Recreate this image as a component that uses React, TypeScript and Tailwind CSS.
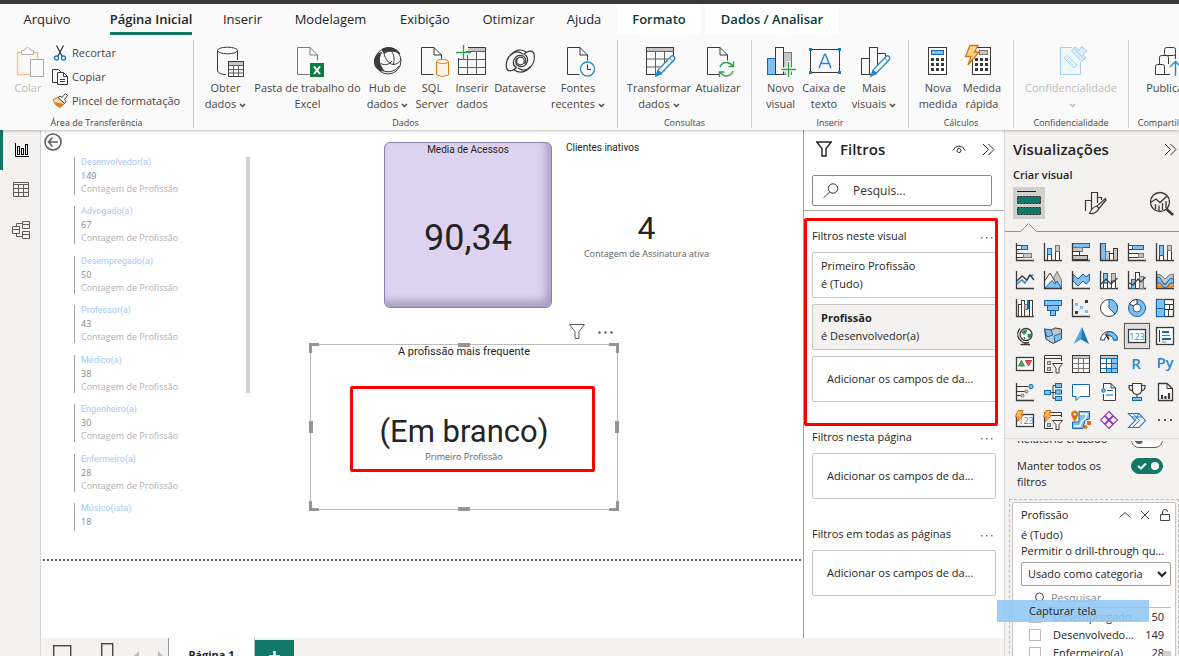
import React from "react";
import type { ReactNode } from "react";

const DARK = "#3b3a39";
const BLUE = "#1068b4";
const SKY = "#83beec";
const GRAY = "#c8c6c4";
const MID = "#797775";

/* ---------- drawing helpers ---------- */

function Big({ children }: { children: ReactNode }) {
  return (
    <svg width="32" height="32" viewBox="0 0 32 32" fill="none" stroke={DARK} className="shrink-0 overflow-visible" aria-hidden="true">
      {children}
    </svg>
  );
}

function Small({ children }: { children: ReactNode }) {
  return (
    <svg width="18" height="18" viewBox="0 0 18 18" fill="none" stroke={DARK} className="shrink-0 overflow-visible" aria-hidden="true">
      {children}
    </svg>
  );
}

const Page = ({ x = 5.5, stroke = DARK }: { x?: number; stroke?: string }) => (
  <path
    transform={`translate(${x} 1.5)`}
    d="M12 27 H0 V0 H12.5 L20 7.5 V13 M12.5 0 V7.5 H20"
    stroke={stroke}
    fill="none"
  />
);

const Pencil = () => (
  <g>
    <path d="M13 30 L15.5 23.5 L28 10.5 Q29.5 9 31 10.5 Q32.5 12 31.5 13.5 L19 26.5 Z" fill="#fafafa" stroke="#2b88c8" strokeWidth="1.3" />
    <path d="M13 30 L15 24 L19 27.5 Z" fill="#2b88c8" stroke="#2b88c8" />
    <path d="M26.5 12 L30 15.5" stroke="#2b88c8" />
  </g>
);

const Dots = ({ x, y }: { x: number; y: number }) => (
  <g fill={DARK} stroke="none">
    {[0, 1, 2].map((r) =>
      [0, 1, 2].map((c) => <rect key={`${r}-${c}`} x={x + c * 5} y={y + r * 5} width="3" height="3" />),
    )}
  </g>
);

/* ---------- ribbon icons ---------- */

const IconPaste = () => (
  <Big>
    <path d="M10 6.5 H5.5 V28.5 H18 M21 6.5 H25.5 V13" stroke="#f2c594" strokeWidth="1.4" />
    <path d="M6.800 7.800 H24.200 V13 M6.800 7.800 V27.200 H18" stroke="#fcecd9" strokeWidth="1.500" />
    <path d="M9.5 8.5 V4.5 H12.5 Q13 1.5 15.5 1.5 T18.5 4.5 H21.5 V8.5 Z" fill="#fafafa" stroke="#b8b6b4" />
    <rect x="18.5" y="13.5" width="13" height="17" fill="#fafafa" stroke="#b0aeac" />
  </Big>
);
const IconDatabase = () => (
  <Big>
    <path d="M7.500 4.500 V25 Q9 28.500 16 28.500 M27.500 4.500 V14" />
    <ellipse cx="17.500" cy="4.500" rx="10" ry="3.300" />
    <rect x="18.500" y="15.500" width="15" height="15" fill="#fafafa" />
    <rect x="19" y="16" width="14" height="3" fill={GRAY} stroke="none" />
    <path d="M18.500 19.500 h15 M18.500 23.500 h15 M18.500 27 h15 M23.500 19.500 v11 M28.500 19.500 v11" stroke="#605e5c" />
  </Big>
);
const IconExcel = () => (
  <Big>
    <Page stroke="#797775" />
    <rect x="18" y="17" width="14" height="14" fill="#107c41" stroke="none" />
    <path d="M22 20.500 L28 28 M28 20.500 L22 28" stroke="#fff" strokeWidth="2" />
  </Big>
);
const IconHub = () => (
  <Big>
    <circle cx="16" cy="15" r="13" />
    <path d="M9.500 6.500 C6 12 7 19 12 25 C5 25 2 20 2.500 14 C3 10 6 7.500 9.500 6.500 Z" fill={DARK} />
    <path d="M10 3.500 C16 -0.500 25 2 28 8 C23 4.500 17 4 12 7.500 Z" fill={DARK} />
    <path d="M12 7.500 C13 13 17 18 21 18.500 C25 18.500 28 16 29 13.500 M9 17.500 C13 20 18 18 20 15 M19 4.500 C22 8 23 14 21 18.500 M12 25 C17 27 24 25 27 20" />
  </Big>
);
const IconSql = () => (
  <Big>
    <Page x={5.500} />
    <path d="M20.500 15.500 V29 Q26.500 32 32.500 29 V15.500" fill="#fdf3e7" stroke="#e07b1c" />
    <ellipse cx="26.500" cy="15.500" rx="6" ry="2" fill="#fdf3e7" stroke="#e07b1c" />
  </Big>
);
const IconEnterData = () => (
  <Big>
    <rect x="12" y="2" width="17" height="3" fill={GRAY} stroke="none" />
    <path d="M12 1.500 H29.500 V28.500 H2.500 V12" />
    <path d="M10 5.500 H29.500 M2.500 13.500 H29.500 M2.500 21.500 H29.500 M11.500 9 V28.500 M20.500 5.500 V28.500" stroke="#605e5c" />
    <path d="M7.500 -1 V14 M0 6.500 H15" stroke="#2f9e4f" strokeWidth="1.400" />
  </Big>
);
const IconDataverse = () => (
  <Big>
    <path d="M19 8 C9 1 1 13 2.500 22 C4 27 10 24.500 12.500 21.500 C6 18 11 8 17.500 9.500 C22 10.500 23 15 20.500 18" strokeWidth="1.200" />
    <path d="M14 22 C24 29 32 17 30 8 C28.500 3 23 5.500 20 8 C27 12 22.500 22 16 20.500 C11.500 19.500 10.500 15 13 12" strokeWidth="1.200" />
    <path d="M7 9 C12 3 18 3 22 6 M26 21 C21 27 15 27 10 24" strokeWidth="1.200" />
    <circle cx="16.500" cy="15" r="3.800" strokeWidth="1.200" />
  </Big>
);
const IconRecent = () => (
  <Big>
    <Page />
    <circle cx="25.500" cy="23" r="7" fill="#fafafa" stroke="#2b88c8" strokeWidth="1.300" />
    <path d="M25.500 18.500 V23.500 H29" />
  </Big>
);
const IconTransform = () => (
  <Big>
    <rect x="3.500" y="1.500" width="27" height="27" />
    <rect x="4" y="2" width="26" height="3" fill={GRAY} stroke="none" />
    <path d="M3.500 5.500 h27 M3.500 13 h27 M3.500 21 h27 M12.500 5.500 v23 M21.500 5.500 v23" stroke="#605e5c" />
    <path d="M31 15 V30 H17 Z" fill="#fafafa" stroke="none" />
    <Pencil />
  </Big>
);
const IconRefresh = () => (
  <Big>
    <Page x={5.500} />
    <circle cx="24.500" cy="23" r="8" fill="#fafafa" stroke="none" />
    <path d="M18 21 Q20 16 25 16.500 Q29 17 31 20.500 M31.500 15.500 V20.500 H26.500 M31 25 Q29 30 24.500 30 Q20 29.500 18 26 M17.500 31 V26 H22.500" stroke="#2f9e4f" strokeWidth="1.400" />
  </Big>
);
const IconNewVisual = () => (
  <Big>
    <rect x="2.500" y="12.500" width="8" height="16" fill={SKY} stroke={BLUE} />
    <rect x="18.500" y="6.500" width="8" height="22" fill={GRAY} stroke={MID} />
    <rect x="10.500" y="1.500" width="8" height="27" fill="#fafafa" />
    <path d="M23.500 15 V31 M16 23.500 H31" stroke="#fafafa" strokeWidth="4" />
    <path d="M23.500 16 V31 M16.500 23.500 H31" stroke="#2f9e4f" strokeWidth="1.400" />
  </Big>
);
const IconTextBox = () => (
  <Big>
    <rect x="2.500" y="3.500" width="29" height="23" />
    <path d="M11 22 L16.500 8.500 H17.500 L23 22 M13 17.500 H21" stroke="#2b88c8" strokeWidth="1.500" />
    <g fill="#0f7bc8" stroke="none">
      <rect x="1" y="2" width="3" height="3" />
      <rect x="30" y="2" width="3" height="3" />
      <rect x="1" y="25" width="3" height="3" />
      <rect x="30" y="25" width="3" height="3" />
    </g>
  </Big>
);
const IconMoreVisuals = () => (
  <Big>
    <rect x="3.500" y="12.500" width="8" height="16" />
    <rect x="11.500" y="1.500" width="8" height="27" />
    <path d="M19.500 7.500 H27.500 V28.500 H19.500" />
    <path d="M28 15 V31 H16 Z" fill="#fafafa" stroke="none" />
    <Pencil />
  </Big>
);
const IconCalculator = () => (
  <Big>
    <rect x="6.500" y="1.500" width="18" height="27" fill="#fff" />
    <rect x="9.500" y="4.500" width="12" height="4" fill={SKY} stroke={BLUE} />
    <Dots x={9} y={12} />
  </Big>
);
const IconQuickMeasure = () => (
  <Big>
    <rect x="6.500" y="1.500" width="18" height="27" fill="#fff" />
    <rect x="13.500" y="4.500" width="8" height="4" fill={GRAY} stroke={MID} />
    <Dots x={9} y={12} />
    <path d="M4 -0.500 H12 L8.500 6 H13 L2 19 L5 10.500 H-0.500 Z" fill="#fcd58f" stroke="#d9730d" strokeWidth="1.300" />
  </Big>
);
const IconSensitivity = () => (
  <Big>
    <path d="M17 1.500 H5.500 V28.500 H25.500 V16" stroke="#a5cfe8" fill="#f1f8fc" />
    <path d="M9 12 L12 9.500 L22 19 L19 22 Z M12 12.500 L19 19.500" stroke="#a5cfe8" />
    <path d="M16.500 5 L20 1 L24 4.500 L26.500 0.500 L32 5 L28 8.500 L31 12 L27 15.500 Z" fill="#dceef7" stroke="#9ccbe6" />
    <path d="M19 2.500 L29 13" stroke="#9ccbe6" />
  </Big>
);
const IconPublish = () => (
  <Big>
    <rect x="13.500" y="1.500" width="11" height="8" rx="2" />
    <path d="M17.500 18 V11.500 Q17.500 9.500 15.500 9.500 H10.500 Q8.500 9.500 8.500 11.500 V18 M24.500 8 V13" />
    <path d="M13.500 28.500 V20.500 Q13.500 18.500 11.500 18.500 H6.500 Q4.500 18.500 4.500 20.500 V28.500 H19" />
    <path d="M24.500 30 V15 M19 21 L24.500 15.500 L30 21" stroke="#2b88c8" strokeWidth="1.400" />
  </Big>
);

const CutIcon = () => (
  <svg width="16" height="16" viewBox="0 0 16 16" fill="none" stroke={DARK} aria-hidden="true">
    <path d="M4.500 0.500 L10.500 12 M11.500 0.500 L5.500 12" strokeWidth="1.300" />
    <circle cx="4.500" cy="13" r="2" stroke="#0f7bc8" strokeWidth="1.300" />
    <circle cx="11.500" cy="13" r="2" stroke="#0f7bc8" strokeWidth="1.300" />
  </svg>
);
const CopyIcon = () => (
  <svg width="16" height="16" viewBox="0 0 16 16" fill="none" stroke={DARK} aria-hidden="true">
    <path d="M5 13.500 H0.500 V0.500 H6.500 L9 3" />
    <path d="M5.500 3.500 H11.500 L15.500 7.500 V15.500 H5.500 Z M11.500 3.500 V7.500 H15.500 M8 10.500 H13 M8 12.500 H13" />
  </svg>
);
const BrushIcon = () => (
  <svg width="16" height="16" viewBox="0 0 16 16" fill="none" stroke={DARK} aria-hidden="true">
    <path d="M1 6.500 L6 4.500 L12.500 10.500 L8 14.500 Q3 13 1 6.500 Z" fill="#fce0b5" stroke="#e07b1c" />
    <path d="M2 9 L12 11 L8 14.500 Q4 13 2 9 Z" fill="#e07b1c" stroke="none" />
    <path d="M6 4.500 L8 3 L10 4.500 L13.500 0.500 L15.500 2.500 L12.500 6.500 L14 8.500 L12.500 10.500 Z" fill="#fafafa" />
  </svg>
);

const Chevron = () => (
  <svg width="7" height="5" viewBox="0 0 7 5" fill="none" stroke="currentColor" strokeWidth="1.500" className="ml-[3px] inline-block" aria-hidden="true">
    <path d="M1 1 L3.500 3.500 L6 1" />
  </svg>
);

/* ---------- ribbon ---------- */

function RibbonButton({ width, icon, lines, menu, muted }: { width: string; icon: ReactNode; lines: string[]; menu?: boolean; muted?: boolean }) {
  return (
    <button type="button" disabled={muted} className={`flex shrink-0 flex-col items-center ${width} ${muted ? "text-[#bdbbb9]" : "text-[#484644]"}`}>
      {icon}
      <span className="mt-0.5 block text-center text-[11px] leading-4 whitespace-nowrap">
        {lines.map((line, i) => (
          <span key={line} className="block">
            {line}
            {menu && i === lines.length - 1 && <Chevron />}
          </span>
        ))}
      </span>
    </button>
  );
}

function RibbonGroup({ width, label, pad, children }: { width: string; label: string; pad: string; children: ReactNode }) {
  return (
    <section className={`flex shrink-0 flex-col border-r border-[#d2d0ce] ${width}`}>
      <div className={`flex h-[78px] shrink-0 pt-1.5 ${pad}`}>{children}</div>
      <h2 className="text-center text-[9px] leading-[10px] text-[#484644]">{label}</h2>
    </section>
  );
}

const tabs = [
  { name: "Arquivo", box: "w-[94px]" },
  { name: "Página Inicial", box: "w-[114px]", active: true },
  { name: "Inserir", box: "w-[69px]" },
  { name: "Modelagem", box: "w-[107px]" },
  { name: "Exibição", box: "w-[82px]" },
  { name: "Otimizar", box: "w-[85px]" },
  { name: "Ajuda", box: "w-[66px]" },
  { name: "Formato", box: "w-[84px]", context: true },
  { name: "Dados / Analisar", box: "w-[134px] ml-1", context: true },
];

function Header() {
  return (
    <header className="relative z-10 shrink-0 bg-[#fafafa] shadow-[0_1px_3px_rgba(0,0,0,0.25)]">
      <div className="h-1 bg-[#3b3a39]" />
      <nav className="flex h-[31px] text-[13px] text-[#252423]">
        {tabs.map((t) => (
          <button
            key={t.name}
            type="button"
            className={`flex shrink-0 justify-center whitespace-nowrap ${t.box} ${t.context ? "bg-white font-semibold text-[#0b3b37]" : ""} ${t.active ? "font-semibold" : ""}`}
          >
            <span className={`flex h-full items-center border-b-[3px] pt-1 ${t.active ? "border-[#117865]" : "border-transparent"}`}>{t.name}</span>
          </button>
        ))}
      </nav>
      <div className="flex h-[95px] overflow-hidden pt-[5px] pb-0.5">
        <section className="flex w-[194px] shrink-0 flex-col border-r border-[#d2d0ce]">
          <div className="flex h-[78px] shrink-0 pt-1.5 pl-2">
            <RibbonButton width="w-10" icon={<IconPaste />} lines={["Colar"]} muted />
            <div className="-mt-[5px] ml-1 flex flex-col text-[11px] text-[#484644]">
              <button type="button" className="flex h-6 items-center gap-1"><CutIcon />Recortar</button>
              <button type="button" className="flex h-6 items-center gap-1"><CopyIcon />Copiar</button>
              <button type="button" className="flex h-6 items-center gap-1 whitespace-nowrap"><BrushIcon />Pincel de formatação</button>
            </div>
          </div>
          <h2 className="text-center text-[9px] leading-[10px] text-[#484644]">Área de Transferência</h2>
        </section>
        <RibbonGroup width="w-[424px]" label="Dados" pad="pl-1.5">
          <RibbonButton width="w-[51px]" icon={<IconDatabase />} lines={["Obter", "dados"]} menu />
          <RibbonButton width="w-[113px]" icon={<IconExcel />} lines={["Pasta de trabalho do", "Excel"]} />
          <RibbonButton width="w-[47px]" icon={<IconHub />} lines={["Hub de", "dados"]} menu />
          <RibbonButton width="w-[42px]" icon={<IconSql />} lines={["SQL", "Server"]} />
          <RibbonButton width="w-[38px]" icon={<IconEnterData />} lines={["Inserir", "dados"]} />
          <RibbonButton width="w-[58px]" icon={<IconDataverse />} lines={["Dataverse"]} />
          <RibbonButton width="w-[58px]" icon={<IconRecent />} lines={["Fontes", "recentes"]} menu />
        </RibbonGroup>
        <RibbonGroup width="w-[134px]" label="Consultas" pad="pl-2">
          <RibbonButton width="w-[66px]" icon={<IconTransform />} lines={["Transformar", "dados"]} menu />
          <RibbonButton width="w-[52px]" icon={<IconRefresh />} lines={["Atualizar"]} />
        </RibbonGroup>
        <RibbonGroup width="w-[157px]" label="Inserir" pad="pl-2.5">
          <RibbonButton width="w-[37px]" icon={<IconNewVisual />} lines={["Novo", "visual"]} />
          <RibbonButton width="w-[50px]" icon={<IconTextBox />} lines={["Caixa de", "texto"]} />
          <RibbonButton width="w-[50px]" icon={<IconMoreVisuals />} lines={["Mais", "visuais"]} menu />
        </RibbonGroup>
        <RibbonGroup width="w-[105px]" label="Cálculos" pad="pl-[7px]">
          <RibbonButton width="w-[44px]" icon={<IconCalculator />} lines={["Nova", "medida"]} />
          <RibbonButton width="w-[44px]" icon={<IconQuickMeasure />} lines={["Medida", "rápida"]} />
        </RibbonGroup>
        <RibbonGroup width="w-[115px]" label="Confidencialidade" pad="">
          <RibbonButton width="w-[114px]" icon={<IconSensitivity />} lines={["Confidencialidade", ""]} menu muted />
        </RibbonGroup>
        <RibbonGroup width="w-[74px]" label="Compartilhar" pad="">
          <RibbonButton width="w-[76px]" icon={<IconPublish />} lines={["Publicar"]} />
        </RibbonGroup>
      </div>
    </header>
  );
}

/* ---------- left rail ---------- */

function Rail() {
  return (
    <nav className="flex w-[41px] shrink-0 flex-col border-r border-[#d8d6d4] bg-[#f3f2f1]">
      <button type="button" aria-label="Relatório" className="flex h-10 items-center justify-center border-l-[3px] border-[#117865]">
        <svg width="16" height="16" viewBox="0 0 16 16" fill="none" stroke="#000" aria-hidden="true">
          <path d="M1.500 1 V14.500 H15" />
          <rect x="3.500" y="4.500" width="2" height="8" />
          <rect x="7.500" y="6.500" width="2" height="6" />
          <rect x="11.500" y="2.500" width="2" height="10" />
        </svg>
      </button>
      <button type="button" aria-label="Dados" className="flex h-10 items-center justify-center pl-0.5">
        <svg width="16" height="16" viewBox="0 0 16 16" fill="none" stroke="#605e5c" aria-hidden="true">
          <path d="M0.500 0.500 h15 v14 h-15 Z M0.500 2.500 h15 M0.500 6.500 h15 M0.500 10.500 h15 M5.500 2.500 v12 M10.500 2.500 v12" />
        </svg>
      </button>
      <button type="button" aria-label="Modelo" className="flex h-10 items-center justify-center pl-0.5">
        <svg width="18" height="18" viewBox="0 0 18 18" fill="none" stroke="#605e5c" aria-hidden="true">
          <path d="M10.500 0.500 h7 v7 h-7 Z M10.500 3.500 h7 M10.500 10.500 h7 v7 h-7 Z M10.500 13.500 h7 M0.500 5.500 h7 v7 h-7 Z M0.500 8.500 h7 M4.500 5.500 V2.500 H10.500 M4.500 12.500 V15.500 H10.500" />
        </svg>
      </button>
    </nav>
  );
}

/* ---------- report canvas ---------- */

const professions = [
  { name: "Desenvolvedor(a)", count: 149 },
  { name: "Advogado(a)", count: 67 },
  { name: "Desempregado(a)", count: 50 },
  { name: "Professor(a)", count: 43 },
  { name: "Médico(a)", count: 38 },
  { name: "Engenheiro(a)", count: 30 },
  { name: "Enfermeiro(a)", count: 28 },
  { name: "Músico(ista)", count: 18 },
];

const handles = [
  "-top-0.5 -left-0.5 h-2.5 w-2.5 border-t-[3px] border-l-[3px]",
  "-top-0.5 -right-0.5 h-2.5 w-2.5 border-t-[3px] border-r-[3px]",
  "-bottom-0.5 -left-0.5 h-2.5 w-2.5 border-b-[3px] border-l-[3px]",
  "-bottom-0.5 -right-0.5 h-2.5 w-2.5 border-b-[3px] border-r-[3px]",
  "-top-0.5 left-[147px] h-1 w-3 border-2",
  "-bottom-0.5 left-[147px] h-1 w-3 border-2",
  "top-[76px] -left-0.5 h-3 w-1 border-2",
  "top-[76px] -right-0.5 h-3 w-1 border-2",
];

function Canvas() {
  return (
    <main className="relative min-w-0 flex-1 overflow-hidden bg-white">
      <button type="button" aria-label="Voltar" className="absolute top-[3px] left-[3px]">
        <svg width="18" height="18" viewBox="0 0 18 18" fill="none" stroke="#605e5c" strokeWidth="1.600" aria-hidden="true">
          <circle cx="9" cy="9" r="8" />
          <path d="M14 9 H4.500 M8.500 4.500 L4.500 9 L8.500 13.500" />
        </svg>
      </button>

      <div className="absolute top-[27px] left-[33px] h-[374px] w-[176px] overflow-hidden">
        <ul className="flex h-[384px] flex-col justify-between">
          {professions.map((p) => (
            <li key={p.name} className="h-[38px] border-l border-[#a19f9d] pl-1.5 text-[9px]">
              <p className="h-[11px] font-[Roboto,sans-serif] leading-[10px] text-[#a9c8f5]">{p.name}</p>
              <p className="leading-4 text-[#8a8886]">{p.count}</p>
              <p className="leading-[10px] text-[#b3b1af]">Contagem de Profissão</p>
            </li>
          ))}
        </ul>
        <div className="absolute top-0 right-0 h-[236px] w-1 bg-[#d2d0ce]" />
      </div>

      <article className="absolute top-3 left-[343px] flex h-[166px] w-[168px] flex-col items-center rounded-md border border-[#8c82ab] bg-[#ddd3f0] font-[Roboto,sans-serif] text-[#252423] shadow-[inset_-5px_-6px_9px_rgba(60,45,90,0.32)]">
        <h3 className="text-[10px] leading-[14px]">Media de Acessos</h3>
        <p className="mt-[59px] text-[36px] leading-[44px]">90,34</p>
      </article>

      <article className="absolute top-[11px] left-[525px] flex w-[161px] flex-col font-[Roboto,sans-serif] text-[#252423]">
        <h3 className="text-[10px] leading-[14px]">Clientes inativos</h3>
        <p className="mt-[55px] text-center text-[32px] leading-9">4</p>
        <p className="text-center font-['Open_Sans',sans-serif] text-[9px] leading-4 text-[#605e5c]">Contagem de Assinatura ativa</p>
      </article>

      <div className="absolute top-[193px] left-[527px] flex items-center gap-3">
        <svg width="18" height="18" viewBox="0 0 18 18" fill="none" stroke="#605e5c" aria-hidden="true">
          <path d="M1.500 1.500 H16.500 L11 8.500 V15.500 H7 V8.500 Z" />
        </svg>
        <svg width="16" height="3" viewBox="0 0 16 3" fill="#605e5c" aria-hidden="true">
          <circle cx="1.500" cy="1.500" r="1.200" />
          <circle cx="7.500" cy="1.500" r="1.200" />
          <circle cx="13.500" cy="1.500" r="1.200" />
        </svg>
      </div>

      <article className="absolute top-[214px] left-[269px] flex h-[166px] w-[308px] flex-col items-center border border-[#bebbb8] font-[Roboto,sans-serif] text-[#252423]">
        <h3 className="text-[11px] leading-[13px]">A profissão mais frequente</h3>
        <p className="mt-14 text-[31px] leading-9">(Em branco)</p>
        <p className="font-['Open_Sans',sans-serif] text-[9px] leading-[14px] text-[#605e5c]">Primeiro Profissão</p>
        {handles.map((h) => (
          <span key={h} className={`absolute border-[#979593] ${h}`} />
        ))}
        <span className="absolute top-[41px] left-[39px] h-[86px] w-[245px] rounded-xs border-[3px] border-[#fb0000]" />
      </article>

      <div className="absolute top-[429px] right-0 left-0.5 h-0.5 bg-[repeating-linear-gradient(90deg,#605e5c_0_2px,transparent_2px_4px)]" />
    </main>
  );
}

/* ---------- filters pane ---------- */

const DoubleChevron = () => (
  <svg width="13" height="13" viewBox="0 0 13 13" fill="none" stroke="#323130" aria-hidden="true">
    <path d="M1 1 L6.500 6.500 L1 12 M6.500 1 L12 6.500 L6.500 12" />
  </svg>
);

const SearchIcon = () => (
  <svg width="16" height="16" viewBox="0 0 16 16" fill="none" stroke="#323130" className="shrink-0" aria-hidden="true">
    <circle cx="10" cy="5.500" r="4.700" />
    <path d="M6.500 9 L0.800 14.800" />
  </svg>
);

const DropBox = () => (
  <div className="flex h-[46px] items-center rounded-xs border border-[#c8c6c4] bg-white pl-3.5 text-[11px] whitespace-nowrap">Adicionar os campos de da...</div>
);

function FilterSection({ title, children }: { title: string; children: ReactNode }) {
  return (
    <section className="flex flex-col gap-1.5">
      <div className="-mb-1.5 flex h-8 items-center justify-between pr-[3px] text-[11px]">
        <h3>{title}</h3>
        <button type="button" aria-label={`Opções de ${title}`} className="pt-1">
          <svg width="12" height="2" viewBox="0 0 12 2" fill="#797775" aria-hidden="true">
            <rect width="1.500" height="1.500" />
            <rect x="5" width="1.500" height="1.500" />
            <rect x="10" width="1.500" height="1.500" />
          </svg>
        </button>
      </div>
      {children}
    </section>
  );
}

function Filters() {
  return (
    <aside className="relative flex w-[201px] shrink-0 flex-col border-l border-[#a19f9d] bg-white text-[#252423]">
      <div className="flex h-[38px] items-center pl-3 pr-[9px]">
        <svg width="16" height="16" viewBox="0 0 16 16" fill="none" stroke="#252423" strokeWidth="1.400" aria-hidden="true">
          <path d="M0.700 1 H15.300 L10 7.500 V15 H6 V7.500 Z" />
        </svg>
        <h2 className="ml-2 flex-1 text-[15px] font-semibold">Filtros</h2>
        <svg width="14" height="9" viewBox="0 0 14 9" fill="none" stroke="#323130" className="mr-4" aria-hidden="true">
          <path d="M1 5.500 Q3 1 7 1 T13 5.500" />
          <circle cx="7" cy="5.500" r="2" />
        </svg>
        <DoubleChevron />
      </div>
      <div className="border-b border-[#b3b0ad] px-2 pt-[7px] pb-1">
        <label className="mr-1 flex h-[31px] items-center rounded-xs border border-[#8a8886] pl-2.5">
          <SearchIcon />
          <input type="text" aria-label="Pesquisar filtros" placeholder="Pesquis..." className="ml-3.5 w-full min-w-0 text-xs outline-none placeholder:text-[#323130]" />
        </label>
      </div>
      <div className="flex flex-col gap-[19px] pt-[9px] pr-2 pl-2">
        <FilterSection title="Filtros neste visual">
          <div className="h-[46px] rounded-xs border border-[#c8c6c4] pt-1 pl-2 text-[11px] leading-[18px]">
            <p>Primeiro Profissão</p>
            <p>é (Tudo)</p>
          </div>
          <div className="h-[46px] rounded-xs border border-[#c8c6c4] bg-[#f3f2f1] pt-1 pl-2 text-[11px] leading-[18px]">
            <p className="font-bold">Profissão</p>
            <p>é Desenvolvedor(a)</p>
          </div>
          <DropBox />
        </FilterSection>
        <FilterSection title="Filtros nesta página">
          <DropBox />
        </FilterSection>
        <FilterSection title="Filtros em todas as páginas">
          <DropBox />
        </FilterSection>
      </div>
      <span className="absolute top-[88px] left-0 h-[208px] w-[194px] rounded-xs border-[3px] border-[#fb0000]" />
    </aside>
  );
}

/* ---------- visualizations pane ---------- */

const axes = <path d="M0.500 0 V17.500 H18" strokeWidth="1.300" />;

const visuals: { label: string; art: ReactNode }[] = [
  { label: "Barras empilhadas", art: <>{axes}<rect x="0.500" y="2.500" width="5" height="4" fill="#fff" /><rect x="5.500" y="2.500" width="6" height="4" fill={SKY} stroke={BLUE} /><rect x="0.500" y="10.500" width="7" height="4" fill="#fff" /><rect x="7.500" y="10.500" width="8" height="4" fill={GRAY} stroke={MID} /></> },
  { label: "Colunas empilhadas", art: <>{axes}<rect x="3.500" y="11.500" width="4" height="6" fill="#fff" /><rect x="3.500" y="5.500" width="4" height="6" fill={SKY} stroke={BLUE} /><rect x="11.500" y="8.500" width="4" height="9" fill="#fff" /><rect x="11.500" y="2.500" width="4" height="6" fill={GRAY} stroke={MID} /></> },
  { label: "Barras agrupadas", art: <><rect x="0.500" y="0.500" width="17" height="4" fill={SKY} stroke={BLUE} /><rect x="0.500" y="4.500" width="10" height="4" fill={GRAY} stroke={MID} /><rect x="0.500" y="8.500" width="7" height="4" fill="#fff" /><rect x="0.500" y="12.500" width="15" height="4" fill={GRAY} stroke={DARK} />{axes}</> },
  { label: "Colunas agrupadas", art: <><rect x="0.500" y="0.500" width="5" height="17" fill={SKY} stroke={BLUE} /><rect x="5.500" y="8.500" width="4" height="9" fill={GRAY} stroke={MID} /><rect x="9.500" y="10.500" width="4" height="7" fill="#fff" /><rect x="13.500" y="5.500" width="4" height="12" fill={GRAY} stroke={DARK} />{axes}</> },
  { label: "Barras 100%", art: <>{axes}<rect x="0.500" y="2.500" width="4" height="4" fill="#fff" /><rect x="4.500" y="2.500" width="11" height="4" fill={SKY} stroke={BLUE} /><rect x="0.500" y="10.500" width="10" height="4" fill="#fff" /><rect x="10.500" y="10.500" width="5" height="4" fill={GRAY} stroke={MID} /></> },
  { label: "Colunas 100%", art: <>{axes}<rect x="3.500" y="12.500" width="4" height="5" fill="#fff" /><rect x="3.500" y="2.500" width="4" height="10" fill={SKY} stroke={BLUE} /><rect x="11.500" y="7.500" width="4" height="10" fill="#fff" /><rect x="11.500" y="2.500" width="4" height="5" fill={GRAY} stroke={MID} /></> },

  { label: "Linhas", art: <>{axes}<path d="M1 13 L6 9 L9 12 L13 5 L17.500 4" stroke="#2b88c8" strokeWidth="1.400" /><path d="M1 10 L6 5 L11 9 L14 4 L18 9" strokeWidth="1.400" /></> },
  { label: "Área", art: <><path d="M10 6 L13 0.500 L17.500 9 V17.500 H10 Z" fill={GRAY} stroke={MID} /><path d="M0.500 17.500 V10 L6 2 L15 17.500 Z" fill="#fff" /><path d="M0.500 17.500 L8 9.500 L11 13 L13 10 L17.500 17.500 Z" fill={SKY} stroke={BLUE} />{axes}</> },
  { label: "Área empilhada", art: <><path d="M1 3 L6 8 L11 3 L14 6 L17.500 3 V10 L14 13 L11 10 L6 15 L1 10 Z" fill={SKY} stroke={BLUE} />{axes}</> },
  { label: "Linhas e colunas empilhadas", art: <>{axes}<rect x="3.500" y="2.500" width="4" height="15" fill={SKY} stroke={BLUE} /><rect x="11.500" y="2.500" width="4" height="15" fill={GRAY} stroke={MID} /><path d="M3.500 12 h4 v5.500 h-4 Z M11.500 10 h4 v7.500 h-4 Z" fill="#fff" /><path d="M1 13 L6 8 L11 13 L17.500 7" strokeWidth="1.200" /></> },
  { label: "Linhas e colunas agrupadas", art: <>{axes}<rect x="3.500" y="8.500" width="4" height="9" fill={SKY} stroke={BLUE} /><rect x="7.500" y="1.500" width="4" height="16" fill="#fff" /><rect x="11.500" y="5.500" width="4" height="12" fill={GRAY} stroke={MID} /><path d="M1 12 L5 14 L10 8 L13 11 L17.500 6" strokeWidth="1.200" /></> },
  { label: "Faixas", art: <><path d="M1 10 L6 10 L9 14 L13 10 H17.500 V16 H1 Z" fill="#f2a04f" stroke="#d9730d" /><path d="M1 3 Q5 3 9 8 Q13 3 17.500 3 V9 Q13 9 9 13 Q5 9 1 9 Z" fill={GRAY} stroke={MID} /><path d="M1 6 Q4 5 6 10 Q9 17 12 10 Q14 6 17.500 8 V12 Q14 11 12 15 Q9 19 6 14 Q4 11 1 12 Z" fill={SKY} stroke={BLUE} />{axes}</> },

  { label: "Cascata", art: <>{axes}<rect x="2.500" y="5.500" width="3" height="12" fill="#fff" /><rect x="5.500" y="1.500" width="3" height="16" fill="#fff" /><rect x="8.500" y="5.500" width="3" height="5" fill={GRAY} stroke={MID} /><rect x="11" y="1" width="2" height="9" fill={BLUE} stroke="none" /><rect x="13.500" y="1.500" width="3" height="16" fill="#fff" /></> },
  { label: "Funil", art: <g fill={SKY} stroke={BLUE}><rect x="0.500" y="1.500" width="17" height="5" /><rect x="3.500" y="6.500" width="11" height="5" /><rect x="6.500" y="11.500" width="5" height="5" /></g> },
  { label: "Dispersão", art: <>{axes}<g stroke="none"><rect x="3" y="4" width="3" height="3" fill={SKY} /><rect x="13" y="1" width="3" height="3" fill={DARK} /><rect x="8" y="7" width="3" height="3" fill={SKY} /><rect x="3" y="12" width="3" height="3" fill={DARK} /><rect x="13" y="11" width="3" height="3" fill={SKY} /></g></> },
  { label: "Pizza", art: <><circle cx="9" cy="9" r="8.500" fill="#fff" /><path d="M9 9 V0.500 A8.500 8.500 0 0 1 15 15 Z" fill={SKY} stroke={BLUE} /></> },
  { label: "Rosca", art: <><circle cx="9" cy="9" r="6.300" stroke={SKY} strokeWidth="4.500" /><circle cx="9" cy="9" r="8.500" stroke={BLUE} /><circle cx="9" cy="9" r="4" stroke={BLUE} fill="#fff" /><path d="M9 0.500 A8.500 8.500 0 0 0 1.500 5 L5.500 7 A4 4 0 0 1 9 5 Z" fill="#fff" /></> },
  { label: "Treemap", art: <><rect x="0.500" y="0.500" width="17" height="17" fill="#fff" strokeWidth="1.300" /><path d="M0.500 0.500 h8 v9 h-8 Z M0.500 9.500 h8 v8 h-8 Z" fill={SKY} stroke={BLUE} /><path d="M8.500 5.500 h9 M8.500 10.500 h9 M13.500 5.500 v5 M12.500 10.500 v7" /></> },

  { label: "Mapa", art: <><circle cx="10" cy="7.500" r="6" fill="#fff" strokeWidth="1.300" /><path d="M6 5 L10 3 L10.500 5 L8 7.500 Z M12 7.500 L15 7 L14 11 L12 10 Z M8 10 L9 12 Z" fill="#2f9e4f" stroke="#2f7d46" /><path d="M4 1.500 A8.500 8.500 0 0 0 13 15.300 M9 15.500 V17.500 M4.500 17.500 H14" strokeWidth="1.300" /></> },
  { label: "Mapa coroplético", art: <><path d="M0.500 2 L7 3 L11 1 L17.500 2 V12 L9 16.500 L2 12 Z" fill={GRAY} stroke={DARK} /><path d="M0.500 2 L7 3 L9 8 L3 10 Z M10 9 L17.500 6 V12 L11 15.500 Z" fill={SKY} stroke={BLUE} /></> },
  { label: "Mapa do Azure", art: <><path d="M10 0 L1.500 17 L9 12.500 Z" fill="#58a8dc" stroke="none" /><path d="M10 0 L17 17 L9 12.500 Z" fill="#1d78b4" stroke="none" /></> },
  { label: "Indicador", art: <><path d="M0.500 13 A8.500 8.500 0 0 1 17.500 13 H13.500 A4.500 4.500 0 0 0 4.500 13 Z" fill="#fff" /><path d="M7 4.800 A8.500 8.500 0 0 1 17.500 13 H13.500 A4.500 4.500 0 0 0 8.500 8.500 Z" fill={SKY} stroke={BLUE} /><path d="M9 12.500 L5.500 6.500" strokeWidth="1.800" /></> },
  { label: "Cartão", art: <><rect x="0.500" y="2.500" width="17" height="13" fill="#fff" strokeWidth="1.300" /><text x="9" y="12.500" fontSize="9" textAnchor="middle" fill="#2b88c8" stroke="none" className="font-['Open_Sans',sans-serif]">123</text></> },
  { label: "Cartão de várias linhas", art: <><rect x="0.500" y="0.500" width="17" height="17" fill="#fff" strokeWidth="1.300" /><path d="M3.500 3 V15" /><path d="M6 5 H13 M6 12 H15" stroke={BLUE} strokeWidth="2" /><path d="M6 8.500 H14 M6 15 H10" stroke={MID} /></> },

  { label: "KPI", art: <><rect x="0.500" y="2.500" width="17" height="13" fill="#fff" strokeWidth="1.300" /><path d="M5.500 5.500 L8.500 11 H2.500 Z" fill="#4caf68" stroke="#2f7d46" /><path d="M9.500 5.500 H15.500 L12.500 11 Z" fill="#e25555" stroke="#c22f2f" /></> },
  { label: "Segmentação", art: <><path d="M9 17.500 H0.500 V0.500 H17.500 V6" /><path d="M0.500 3.500 H17.500" /><rect x="3.500" y="6.500" width="3" height="3" stroke={MID} fill={GRAY} /><rect x="3.500" y="12.500" width="3" height="3" stroke={MID} fill={GRAY} /><path d="M8.500 8.500 H18.500 L15 13 V18 H12 V13 Z" fill="#fff" /></> },
  { label: "Tabela", art: <><rect x="0.500" y="0.500" width="17" height="17" fill="#fff" /><rect x="1" y="1" width="16" height="2" fill={GRAY} stroke="none" /><path d="M0.500 3.500 h17 M0.500 8.500 h17 M0.500 13.500 h17 M6.500 3.500 v14 M11.500 3.500 v14" stroke={MID} /></> },
  { label: "Matriz", art: <><rect x="0.500" y="0.500" width="17" height="17" fill="#fff" /><rect x="1" y="1" width="16" height="2" fill={GRAY} stroke="none" /><path d="M11.500 3.500 h6 v14 h-11 v-4 h5 Z" fill={SKY} stroke={BLUE} /><path d="M0.500 3.500 h17 M0.500 8.500 h17 M0.500 13.500 h17 M6.500 3.500 v14 M11.500 3.500 v14" stroke={BLUE} /></> },
  { label: "Script R", art: <text x="8" y="14" fontSize="15" textAnchor="middle" fill="#2b88c8" stroke="none" className="font-['Open_Sans',sans-serif] font-semibold">R</text> },
  { label: "Script Python", art: <text x="9" y="13" fontSize="15" textAnchor="middle" fill="#2b88c8" stroke="none" className="font-['Open_Sans',sans-serif] font-semibold">Py</text> },

  { label: "Influenciadores", art: <>{axes}<path d="M1 3.500 H12" /><circle cx="15" cy="3.500" r="2.200" fill={SKY} stroke={BLUE} /><path d="M1 8.500 H9" /><circle cx="10.500" cy="8.500" r="1.500" fill={GRAY} stroke={MID} /><path d="M1 12.500 H5" /><circle cx="6.500" cy="12.500" r="1.500" fill={GRAY} stroke={MID} /></> },
  { label: "Árvore hierárquica", art: <><path d="M6 9.500 H12 M9 9.500 V2.500 H12 M9 9.500 V15.500 H12" /><g fill={SKY} stroke={BLUE}><rect x="0.500" y="7.500" width="6" height="4" /><rect x="11.500" y="0.500" width="6" height="4" /><rect x="11.500" y="7" width="6" height="4" /><rect x="11.500" y="13.500" width="6" height="4" /></g></> },
  { label: "Perguntas e respostas", art: <path d="M0.500 1.500 H17.500 V13.500 H8 L4 17.500 V13.500 H0.500 Z" fill="#fff" stroke={BLUE} /> },
  { label: "Narrativa", art: <><path d="M3.500 5 V0.500 H11 L15.500 5 V17.500 H3.500 V11 M11 0.500 V5 H15.500" fill="#fff" /><circle cx="3.500" cy="7.500" r="1.800" fill={SKY} stroke={BLUE} /><path d="M7 7.500 H13 M6 12 H13" stroke={BLUE} /></> },
  { label: "Metas", art: <><path d="M4.500 0.500 H13.500 V7 Q13.500 11 9 11.500 Q4.500 11 4.500 7 Z" fill="#fff" strokeWidth="1.200" /><path d="M4.500 2.500 H1 Q0.500 7.500 5 8 M13.500 2.500 H17 Q17.500 7.500 13 8 M9 11.500 V15" strokeWidth="1.200" /><rect x="4.500" y="14.500" width="9" height="3" fill={SKY} stroke={BLUE} /></> },
  { label: "Relatório paginado", art: <><path d="M2.500 0.500 H11 L16.500 5.500 V17.500 H2.500 Z" fill="#fff" strokeWidth="1.300" /><path d="M11 0.500 V5.500 H16.500" /><path d="M6 16 V12 M9.500 16 V13 M13 16 V10" strokeWidth="2.200" /></> },

  { label: "Cartão novo", art: <><rect x="0.500" y="3.500" width="17" height="12" fill="#fff" strokeWidth="1.300" /><text x="10" y="13" fontSize="9" textAnchor="middle" fill="#2b88c8" stroke="none" className="font-['Open_Sans',sans-serif]">123</text><path d="M2 -0.500 H7 L5 4 H7.500 L1 11 L2.500 6 H-0.500 Z" fill="#fcb65c" stroke="#d9730d" /></> },
  { label: "Segmentação nova", art: <><path d="M9 17.500 H0.500 V1.500 H17.500 V6" /><path d="M6 4.500 H17.500" /><rect x="3.500" y="12.500" width="3" height="3" stroke={MID} fill={GRAY} /><path d="M8.500 9.500 H18.500 L15 13.500 V18.500 H12 V13.500 Z" fill="#fff" /><path d="M2 -0.500 H7 L5 4 H7.500 L1 11 L2.500 6 H-0.500 Z" fill="#fcb65c" stroke="#d9730d" /></> },
  { label: "ArcGIS", art: <><path d="M7 0.500 H17.500 V8 L13 9 L11 17.500 H0.500 V11 L7 11 Z" fill={SKY} stroke={BLUE} /><path d="M8 3 L15 3 L13 8 L10 10 L8 15 H2" stroke="#fff" strokeWidth="1.500" /><g fill="#d9730d" stroke="none"><path d="M3 -0.500 A4 4 0 0 1 6 5 L2.500 11 L-0.500 5 A4 4 0 0 1 3 -0.500 Z" /><circle cx="13.500" cy="16" r="2" /><rect x="15" y="10" width="4" height="4" rx="1" /></g><circle cx="2.800" cy="3.200" r="1.300" fill="#fff" stroke="none" /></> },
  { label: "Power Apps", art: <g stroke="#8b3fa0" strokeWidth="1.100" fill="#f6ecf8"><path d="M9 0.500 L13 4.500 L9 8.500 L5 4.500 Z M4.500 5 L8.500 9 L4.500 13 L0.500 9 Z M13.500 5 L17.500 9 L13.500 13 L9.500 9 Z M9 9.500 L13 13.500 L9 17.500 L5 13.500 Z" /></g> },
  { label: "Power Automate", art: <><path d="M0.500 2.500 H11 L17.500 9.500 L11 16.500 H0.500 L7 9.500 Z" fill="#eaf4fc" stroke="#1a73d0" strokeWidth="1.100" /><path d="M4 6 L14 6 M5 2.500 L11.500 9.500 L4.500 16.500 M11 2.500 L7 9.500" stroke="#1a73d0" strokeWidth="0.900" /></> },
  { label: "Mais opções", art: <g fill="#605e5c" stroke="none"><rect x="2" y="8" width="2" height="2" /><rect x="8" y="8" width="2" height="2" /><rect x="14" y="8" width="2" height="2" /></g> },
];

const categories = [
  { name: "Desempregado...", count: 50 },
  { name: "Desenvolvedo...", count: 149 },
  { name: "Enfermeiro(a)", count: 28 },
];

function Toggle({ label, on }: { label: string; on?: boolean }) {
  return (
    <label className="relative block h-4 w-8 shrink-0">
      <input type="checkbox" role="switch" aria-label={label} defaultChecked={on} className="block h-4 w-8 appearance-none rounded-full border border-[#605e5c] bg-white checked:border-[#117865] checked:bg-[#117865]" />
      <span className={`absolute top-1 h-2 w-2 rounded-full ${on ? "right-1 bg-white" : "left-1 bg-[#605e5c]"}`} />
      {on && (
        <svg width="10" height="8" viewBox="0 0 10 8" fill="none" stroke="#fff" strokeWidth="2" className="absolute top-1 left-1.5" aria-hidden="true">
          <path d="M1 4 L4 6.500 L9 1.500" />
        </svg>
      )}
    </label>
  );
}

function Visualizations() {
  return (
    <aside className="relative flex w-[175px] shrink-0 border-l border-[#d8d6d4] bg-[#f3f2f1] text-[#252423]">
      <div className="flex min-w-0 flex-1 flex-col overflow-hidden">
        <div className="flex h-[38px] shrink-0 items-center justify-between pr-0.5 pl-2">
          <h2 className="text-[15px] font-semibold">Visualizações</h2>
          <DoubleChevron />
        </div>
        <h3 className="shrink-0 pl-2 text-[11px] leading-[14px] font-semibold">Criar visual</h3>
        <div className="flex h-[50px] shrink-0 items-start justify-between border-b border-[#979593] pt-[5px] pr-0.5 pl-2">
          <button type="button" aria-label="Campos" className="relative flex h-8 w-8 items-center justify-center bg-[#d2d0ce]">
            <svg width="24" height="24" viewBox="0 0 24 24" fill="none" stroke="#252423" aria-hidden="true">
              <path d="M0 0.500 H19" />
              <rect x="0.500" y="5.500" width="23" height="7" fill="#117865" strokeDasharray="2 1" />
              <rect x="0.500" y="16.500" width="23" height="7" fill="#117865" strokeDasharray="2 1" />
            </svg>
            <svg width="18" height="10" viewBox="0 0 18 10" fill="#f3f2f1" stroke="#979593" className="absolute -bottom-[14px] left-[7px]" aria-hidden="true">
              <path d="M0.500 8.500 L8.500 0.500 L16.500 8.500" />
              <path d="M1.500 9 H15.500" stroke="#f3f2f1" strokeWidth="2" />
            </svg>
          </button>
          <button type="button" aria-label="Formatar" className="flex h-8 w-8 items-center justify-center">
            <svg width="24" height="24" viewBox="0 0 24 24" fill="none" stroke={DARK} strokeWidth="1.200" aria-hidden="true">
              <path d="M2.500 20 V9.500 H8.500 V19 M8.500 9.500 V1.500 H14.500 V12 M14.500 6.500 H18.500 V9" />
              <path d="M22.500 7.500 L14 15 L16 17.500 L23 9 Z M14 15 Q9 16 6.500 22.500 Q13 23.500 16 17.500" fill="#f3f2f1" />
            </svg>
          </button>
          <button type="button" aria-label="Análise" className="flex h-8 w-8 items-center justify-center">
            <svg width="25" height="25" viewBox="0 0 25 25" fill="none" stroke={DARK} strokeWidth="1.300" aria-hidden="true">
              <circle cx="11" cy="11" r="9.500" />
              <path d="M17.500 18 L24 24" strokeWidth="2.500" />
              <path d="M1.500 11.500 L7 8 L11 11.500 L18 5 M6.500 18 V13 M10 20 V14.500 M13.500 19 V12 M17 17 V10" />
            </svg>
          </button>
        </div>
        <div className="grid shrink-0 grid-cols-6 pt-1.5 pb-1 pl-1.5">
          {visuals.map((v) => (
            <button
              key={v.label}
              type="button"
              title={v.label}
              className={`flex h-7 items-center justify-center ${v.label === "Cartão" ? "bg-[#e1dfdd] outline outline-offset-[-2px] outline-[#605e5c]" : ""}`}
            >
              <Small>{v.art}</Small>
            </button>
          ))}
        </div>
        <div className="shrink-0 border-t border-[#e1dfdd]" />
        <div className="mt-0.5 flex min-h-0 flex-1 flex-col overflow-hidden text-[11px]">
          <div className="-mt-2.5 flex h-[17px] shrink-0 items-center justify-between pr-4 pl-3">
            <span>Relatório cruzado</span>
            <Toggle label="Relatório cruzado" />
          </div>
          <div className="mt-2.5 flex shrink-0 justify-between pr-4 pl-3 leading-4">
            <span>Manter todos os<br />filtros</span>
            <Toggle label="Manter todos os filtros" on />
          </div>
          <div className="mt-[9px] ml-1 h-[170px] shrink-0 border border-dashed border-[#bebbb8] p-0.5">
            <div className="flex h-full flex-col rounded-xs border border-[#c8c6c4] bg-white pr-1 pl-2">
              <div className="flex h-6 shrink-0 items-center">
                <span className="flex-1">Profissão</span>
                <svg width="52" height="12" viewBox="0 0 52 12" fill="none" stroke="#484644" aria-hidden="true">
                  <path d="M0.500 8.500 L6 3.500 L11.500 8.500 M22 2 L30 10 M30 2 L22 10" />
                  <path d="M41.500 5.500 h9 v6 h-9 Z M43.500 5.500 V3 Q43.500 0.500 46 0.500 T48.500 3" />
                </svg>
              </div>
              <p className="h-4 shrink-0 leading-4">é (Tudo)</p>
              <p className="h-4 shrink-0 leading-4 whitespace-nowrap">Permitir o drill-through qu...</p>
              <div className="relative mt-[3px] shrink-0">
                <select aria-label="Modo de uso" className="block h-6 w-full appearance-none rounded-xs border border-[#a19f9d] bg-white pl-1.5 text-[11px]">
                  <option>Usado como categoria</option>
                </select>
                <svg width="10" height="7" viewBox="0 0 10 7" fill="none" stroke="#252423" strokeWidth="2" className="pointer-events-none absolute top-[9px] right-1" aria-hidden="true">
                  <path d="M1 1 L5 5 L9 1" />
                </svg>
              </div>
              <label className="flex h-[22px] shrink-0 items-center border-b border-[#bebbb8] pt-1 pl-2.5">
                <svg width="14" height="14" viewBox="0 0 14 14" fill="none" stroke="#484644" className="shrink-0" aria-hidden="true">
                  <circle cx="8.500" cy="5" r="4" />
                  <path d="M5.500 8 L0.500 13" />
                </svg>
                <input type="text" aria-label="Pesquisar valores" placeholder="Pesquisar" className="ml-1.5 w-full min-w-0 outline-none placeholder:text-[#8a8886]" />
              </label>
              <ul className="relative">
                {categories.map((c) => (
                  <li key={c.name}>
                    <label className="flex h-[18px] items-center pr-[7px] pl-2">
                      <input type="checkbox" className="mr-3 h-3 w-3 shrink-0 appearance-none border border-[#bebbb8] bg-white" />
                      <span className="flex-1 whitespace-nowrap">{c.name}</span>
                      <span>{c.count}</span>
                    </label>
                  </li>
                ))}
                <li aria-hidden="true" className="absolute top-[43px] right-0 h-5 w-2 bg-[#d2d0ce]" />
              </ul>
            </div>
          </div>
        </div>
      </div>
      <div className="absolute top-[470px] -left-2 z-10 flex h-[22px] w-[152px] items-center bg-[#93c9f4]/90 pl-8 text-[11px]">Capturar tela</div>
    </aside>
  );
}

/* ---------- page tabs ---------- */

function PageTabs() {
  return (
    <footer className="flex h-[18px] shrink-0 items-start overflow-hidden bg-[#f3f2f1]">
      <div className="flex h-8 w-[128px] shrink-0 items-start border-r border-[#979593] pl-3">
        <svg width="110" height="32" viewBox="0 0 110 32" fill="none" stroke="#484644" strokeWidth="1.400" aria-hidden="true">
          <rect x="0.700" y="7.700" width="17" height="12" />
          <rect x="48.700" y="5.700" width="11" height="18" />
          <path d="M86 13 L81 18 L86 23 Z M105 13 L110 18 L105 23 Z" fill="#bebbb8" stroke="none" />
        </svg>
      </div>
      <button type="button" className="flex h-[34px] w-[86px] shrink-0 items-center justify-center border-r border-[#bebbb8] bg-white text-[11px] font-bold text-[#252423]">Página 1</button>
      <button type="button" aria-label="Nova página" className="mt-0.5 flex h-8 w-[39px] shrink-0 items-center justify-center bg-[#117865]">
        <svg width="11" height="11" viewBox="0 0 11 11" stroke="#fff" strokeWidth="2.500" aria-hidden="true">
          <path d="M5.500 0 V11 M0 5.500 H11" />
        </svg>
      </button>
    </footer>
  );
}

export default function App() {
  return (
    <div className="flex h-screen flex-col overflow-hidden bg-white font-['Open_Sans','Noto_Sans',sans-serif]">
      <Header />
      <div className="flex min-h-0 flex-1">
        <Rail />
        <div className="flex min-w-0 flex-1 flex-col">
          <div className="flex min-h-0 flex-1">
            <Canvas />
            <Filters />
          </div>
          <PageTabs />
        </div>
        <Visualizations />
      </div>
    </div>
  );
}
